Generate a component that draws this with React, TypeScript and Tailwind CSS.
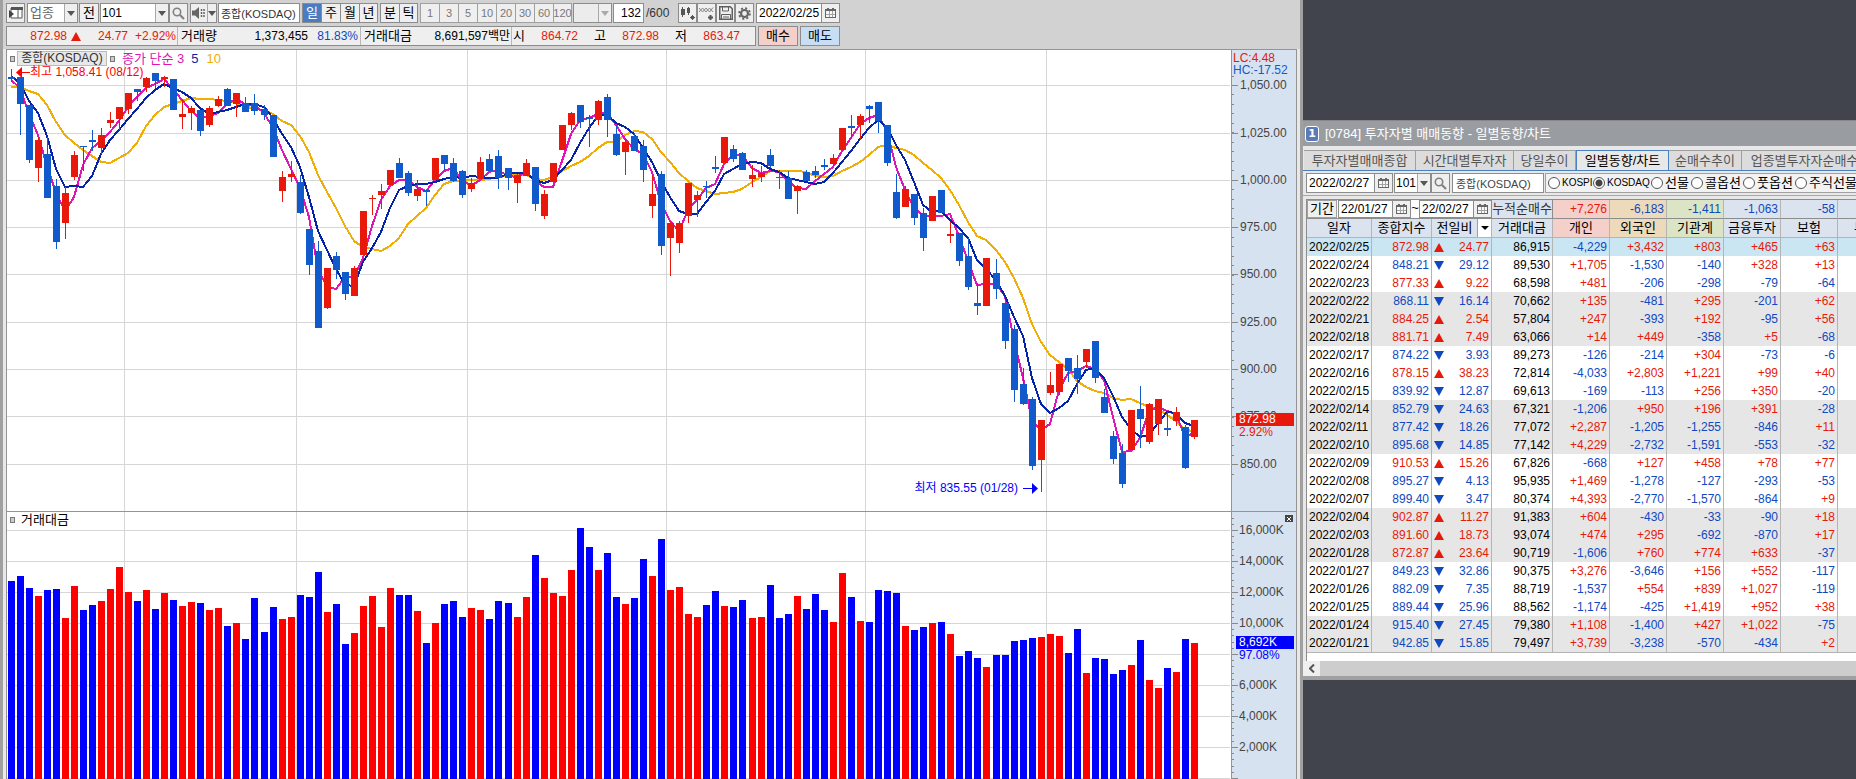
import React from "react";

type Candle = [color: "R" | "B", high: number, low: number, top: number, bottom: number, volume: number];

const CANDLES: Candle[] = [
  ["B", 69, 82, 77, 79, 581], ["B", 77, 135, 77, 104, 576], ["B", 105, 163, 105, 160, 588], ["R", 138, 182, 140, 168, 596],
  ["B", 137, 198, 154, 198, 590], ["B", 179, 249, 186, 242, 589], ["R", 187, 239, 193, 223, 618], ["R", 151, 180, 155, 177, 586],
  ["B", 146, 171, 146, 147, 610], ["B", 130, 151, 140, 142, 605], ["R", 128, 154, 135, 148, 601], ["R", 112, 128, 120, 123, 589],
  ["R", 107, 130, 107, 119, 567], ["R", 93, 114, 93, 109, 592], ["B", 89, 101, 89, 92, 601], ["R", 77, 92, 78, 87, 590],
  ["B", 73, 88, 73, 81, 609], ["R", 76, 87, 77, 79, 593], ["B", 79, 110, 79, 110, 600], ["R", 100, 129, 114, 117, 606],
  ["R", 106, 130, 108, 113, 602], ["B", 110, 136, 110, 131, 603], ["R", 106, 127, 108, 125, 610], ["R", 96, 107, 99, 106, 608],
  ["B", 88, 106, 89, 106, 626], ["R", 93, 117, 93, 104, 623], ["B", 97, 112, 103, 112, 639], ["B", 94, 115, 103, 111, 598],
  ["B", 105, 120, 109, 115, 632], ["B", 115, 157, 115, 157, 607], ["R", 171, 202, 177, 191, 619], ["R", 161, 182, 174, 177, 617],
  ["B", 175, 214, 182, 213, 595], ["B", 229, 275, 229, 265, 597], ["B", 241, 328, 251, 328, 572], ["R", 268, 309, 268, 308, 612],
  ["B", 252, 279, 256, 270, 604], ["B", 272, 300, 272, 294, 644], ["R", 266, 296, 268, 296, 633], ["R", 211, 255, 211, 255, 606],
  ["R", 195, 215, 198, 199, 596], ["R", 184, 209, 191, 195, 627], ["R", 170, 185, 170, 185, 588], ["B", 158, 178, 163, 178, 595],
  ["B", 171, 196, 173, 193, 595], ["R", 180, 201, 189, 196, 611], ["B", 190, 206, 190, 192, 643], ["R", 158, 180, 158, 180, 623],
  ["B", 155, 170, 155, 164, 604], ["B", 158, 182, 163, 181, 601], ["B", 170, 198, 171, 195, 617], ["R", 178, 192, 183, 189, 608],
  ["R", 157, 179, 162, 179, 610], ["B", 154, 171, 159, 171, 619], ["B", 150, 189, 156, 178, 601], ["B", 168, 190, 168, 178, 603],
  ["R", 174, 203, 175, 183, 617], ["R", 159, 176, 163, 176, 597], ["B", 167, 211, 167, 204, 555], ["R", 190, 219, 194, 216, 578],
  ["R", 163, 182, 163, 182, 593], ["R", 125, 150, 125, 150, 596], ["R", 112, 130, 113, 125, 570], ["B", 105, 128, 105, 122, 528],
  ["B", 115, 147, 117, 119, 547], ["R", 100, 125, 101, 120, 570], ["B", 94, 137, 97, 120, 553], ["B", 125, 156, 134, 155, 597],
  ["R", 139, 175, 142, 152, 604], ["B", 133, 151, 136, 151, 598], ["B", 140, 182, 146, 170, 559], ["R", 175, 218, 194, 206, 576],
  ["B", 171, 255, 174, 246, 539], ["R", 222, 276, 223, 238, 590], ["R", 221, 253, 223, 243, 587], ["R", 183, 223, 183, 216, 614],
  ["R", 191, 217, 195, 200, 617], ["B", 181, 198, 186, 187, 605], ["B", 156, 173, 167, 169, 591], ["R", 137, 163, 137, 163, 606],
  ["B", 145, 162, 149, 159, 607], ["B", 152, 170, 153, 170, 600], ["R", 165, 187, 175, 179, 618], ["R", 166, 182, 173, 177, 617],
  ["B", 149, 168, 155, 166, 585], ["B", 170, 189, 177, 178, 618], ["B", 171, 199, 178, 199, 614], ["R", 185, 214, 186, 191, 596],
  ["B", 170, 181, 172, 181, 609], ["B", 166, 178, 171, 175, 594], ["B", 159, 170, 165, 167, 610], ["R", 154, 166, 158, 164, 622],
  ["R", 128, 150, 128, 150, 573], ["B", 115, 138, 126, 128, 597], ["R", 114, 140, 116, 125, 621], ["B", 105, 123, 106, 109, 622],
  ["B", 102, 133, 102, 121, 590], ["B", 125, 166, 125, 163, 591], ["B", 174, 219, 192, 218, 593], ["R", 186, 207, 189, 207, 626],
  ["B", 194, 225, 194, 218, 630], ["B", 208, 251, 213, 238, 627], ["R", 196, 221, 196, 221, 623], ["B", 190, 213, 190, 213, 622],
  ["R", 222, 243, 234, 236, 634], ["B", 233, 266, 233, 261, 656], ["B", 238, 290, 256, 287, 651], ["B", 283, 315, 303, 306, 658],
  ["R", 258, 306, 258, 306, 667], ["B", 259, 299, 273, 289, 655], ["B", 303, 349, 303, 341, 655], ["B", 325, 402, 329, 390, 641],
  ["B", 368, 405, 384, 404, 640], ["B", 397, 470, 399, 466, 638], ["R", 420, 492, 420, 460, 637], ["R", 372, 395, 385, 393, 634],
  ["R", 364, 395, 364, 392, 636], ["B", 358, 382, 358, 371, 653], ["B", 355, 394, 368, 379, 629], ["R", 349, 368, 349, 362, 673],
  ["B", 341, 383, 341, 378, 658], ["B", 389, 413, 397, 413, 659], ["B", 431, 464, 436, 459, 674], ["B", 444, 488, 453, 484, 670],
  ["R", 410, 450, 410, 450, 665], ["B", 386, 448, 409, 419, 640], ["R", 403, 444, 404, 442, 680], ["R", 399, 435, 399, 424, 688],
  ["B", 412, 436, 428, 430, 668], ["R", 407, 426, 412, 421, 672], ["B", 425, 469, 427, 468, 639], ["R", 420, 439, 420, 437, 643],
];

// Closing levels of the nine sessions that precede the first visible candle.
const EARLIER = [100, 126, 108, 86, 70, 68, 72, 81, 80];
const CLOSES = EARLIER.concat(CANDLES.map((c) => (c[0] === "R" ? c[3] : c[4])));

const candleX = (i: number) => 11 + i * 9 + Math.trunc((i - 1) / 27);

function average(period: number) {
  return CANDLES.map((_, i) => {
    const end = i + EARLIER.length + 1;
    const sum = CLOSES.slice(end - period, end).reduce((a, b) => a + b, 0);
    return `${candleX(i)},${Math.round(sum / period)}`;
  }).join(" ");
}

const MONTHS = [124, 296, 467, 666, 865, 1046];
const PRICES: [string, number][] = [
  ["1,050.00", 85], ["1,025.00", 133], ["1,000.00", 180], ["975.00", 227], ["950.00", 274],
  ["925.00", 322], ["900.00", 369], ["875.00", 416], ["850.00", 464],
];
const VOLUMES: [string, number][] = [
  ["16,000K", 530], ["14,000K", 561], ["12,000K", 592], ["10,000K", 623], ["8,000K", 654],
  ["6,000K", 685], ["4,000K", 716], ["2,000K", 747], ["", 778],
];

const ROWS = `2022/02/25 872.98 + 24.77 86,915 -4,229 +3,432 +803 +465 +63
2022/02/24 848.21 - 29.12 89,530 +1,705 -1,530 -140 +328 +13
2022/02/23 877.33 + 9.22 68,598 +481 -206 -298 -79 -64
2022/02/22 868.11 - 16.14 70,662 +135 -481 +295 -201 +62
2022/02/21 884.25 + 2.54 57,804 +247 -393 +192 -95 +56
2022/02/18 881.71 + 7.49 63,066 +14 +449 -358 +5 -68
2022/02/17 874.22 - 3.93 89,273 -126 -214 +304 -73 -6
2022/02/16 878.15 + 38.23 72,814 -4,033 +2,803 +1,221 +99 +40
2022/02/15 839.92 - 12.87 69,613 -169 -113 +256 +350 -20
2022/02/14 852.79 - 24.63 67,321 -1,206 +950 +196 +391 -28
2022/02/11 877.42 - 18.26 77,072 +2,287 -1,205 -1,255 -846 +11
2022/02/10 895.68 - 14.85 77,142 +4,229 -2,732 -1,591 -553 -32
2022/02/09 910.53 + 15.26 67,826 -668 +127 +458 +78 +77
2022/02/08 895.27 - 4.13 95,935 +1,469 -1,278 -127 -293 -53
2022/02/07 899.40 - 3.47 80,374 +4,393 -2,770 -1,570 -864 +9
2022/02/04 902.87 + 11.27 91,383 +604 -430 -33 -90 +18
2022/02/03 891.60 + 18.73 93,074 +474 +295 -692 -870 +17
2022/01/28 872.87 + 23.64 90,719 -1,606 +760 +774 +633 -37
2022/01/27 849.23 - 32.86 90,375 +3,276 -3,646 +156 +552 -117
2022/01/26 882.09 - 7.35 88,719 -1,537 +554 +839 +1,027 -119
2022/01/25 889.44 - 25.96 88,562 -1,174 -425 +1,419 +952 +38
2022/01/24 915.40 - 27.45 79,380 +1,108 -1,400 +427 +1,022 -75
2022/01/21 942.85 - 15.85 79,497 +3,739 -3,238 -570 -434 +2`
  .split("\n")
  .map((line) => line.split(" "));

const UP = "text-[#e61a0a]";
const DOWN = "text-[#1048c0]";
const tone = (v: string) => (v.startsWith("-") ? DOWN : UP);

const Down = ({ light }: { light?: boolean }) => (
  <svg width="8" height="5" viewBox="0 0 8 5" className={light ? "text-[#aaaaaa]" : "text-[#555555]"} aria-hidden>
    <path d="M0 0h8L4 5z" fill="currentColor" />
  </svg>
);

const Calendar = () => (
  <svg width="11" height="10" viewBox="0 0 11 10" shapeRendering="crispEdges" aria-hidden>
    <path d="M0 1h11v9H0z" fill="#666" />
    <path d="M2 0h2v1H2zM7 0h2v1H7z" fill="#666" />
    <path d="M1 3h9v6H1z" fill="#f8f8f8" />
    <path d="M4 3h1v6H4zM7 3h1v6H7zM1 6h9v1H1z" fill="#a4a4a4" />
  </svg>
);

const Search = () => (
  <svg width="13" height="13" viewBox="0 0 13 13" fill="none" stroke="#808080" aria-hidden>
    <circle cx="5" cy="5" r="3.7" strokeWidth="1.6" />
    <path d="M8 8l4 4" strokeWidth="2.2" />
  </svg>
);

const ICON_BUTTON = "flex h-5 w-[19px] shrink-0 items-center justify-center border border-[#8c8c8c] bg-[#efefef]";

function Combo({ label, value, width, light, muted }: { label: string; value: string; width: string; light?: boolean; muted?: boolean }) {
  return (
    <div className={`flex h-5 shrink-0 border border-[#8c8c8c] ${light ? "bg-[#ececec]" : "bg-white"} ${width}`}>
      <select aria-label={label} className={`min-w-0 flex-1 appearance-none bg-transparent outline-none ${muted ? "pl-[2px] text-[#666666]" : "pl-px text-xs text-black"}`}>
        <option>{value}</option>
      </select>
      <span className="flex w-[13px] items-center justify-center border-l border-[#a8a8a8] bg-[#efefef]">
        <Down light={light} />
      </span>
    </div>
  );
}

function DateField({ label, value, width, height = "h-5" }: { label: string; value: string; width: string; height?: string }) {
  return (
    <div className={`flex shrink-0 border border-[#8c8c8c] bg-white text-xs ${height} ${width}`}>
      <input aria-label={label} defaultValue={value} className="min-w-0 flex-1 bg-transparent pl-[2px] outline-none" />
      <button aria-label={`${label} 달력`} className="flex w-[18px] items-center justify-center border-l border-[#8c8c8c] bg-[#efefef]">
        <Calendar />
      </button>
    </div>
  );
}

function Toolbar() {
  return (
    <div className="flex h-[23px] items-end">
      <button aria-label="메뉴" className={`${ICON_BUTTON} mr-[2px]`}>
        <svg width="14" height="12" viewBox="0 0 14 12" aria-hidden>
          <path d="M2 1h11v10H2zM9 1v10" fill="white" stroke="#555" />
          <path d="M2 0h12v3H2z" fill="#555" />
          <path d="M0 3l5 4-5 4z" fill="#444" />
        </svg>
      </button>
      <Combo label="시장 구분" value="업종" width="mr-px w-[51px]" muted />
      <button className="mr-px h-5 w-5 shrink-0 border border-[#8c8c8c] bg-[#efefef]">전</button>
      <Combo label="업종 코드" value="101" width="w-[69px]" />
      <button aria-label="검색" className={ICON_BUTTON}><Search /></button>
      <button aria-label="소리" className="ml-[2px] flex h-5 w-[27px] shrink-0 items-center border border-[#8c8c8c] bg-[#efefef]">
        <svg width="16" height="12" viewBox="0 0 16 12" aria-hidden>
          <path d="M1 3.5h3l4-3.5v12L4 8.5H1z" fill="#666" />
          <path d="M10.5 2v8M13 2v8" stroke="#666" strokeWidth="1.5" strokeDasharray="2 1" />
        </svg>
        <span className="flex h-full flex-1 items-center justify-center border-l border-[#a8a8a8]"><Down /></span>
      </button>
      <input aria-label="종목명" defaultValue="종합(KOSDAQ)" className="ml-px h-5 w-[82px] shrink-0 border border-[#8c8c8c] bg-white pl-[2px] text-[11px] text-[#333333] outline-none" />
      <div className="ml-[2px] flex shrink-0">
        {["일", "주", "월", "년"].map((t, i) => (
          <button key={t} className={`h-5 w-[19px] border border-r-0 border-[#8c8c8c] last:border-r ${i === 0 ? "bg-[#4a7cc4] text-white" : "bg-[#efefef]"}`}>{t}</button>
        ))}
      </div>
      <div className="ml-[2px] flex shrink-0">
        {["분", "틱"].map((t) => (
          <button key={t} className="h-5 w-[19px] border border-r-0 border-[#8c8c8c] bg-[#efefef] last:border-r">{t}</button>
        ))}
      </div>
      <div className="ml-[2px] flex shrink-0 text-[11px] text-[#777777]">
        {["1", "3", "5", "10", "20", "30", "60", "120"].map((t) => (
          <button key={t} className="h-5 w-[19px] border border-r-0 border-[#a0a0a0] bg-[#efefef] last:border-r">
            <span className="flex justify-center">{t}</span>
          </button>
        ))}
      </div>
      <Combo label="분 간격" value="" width="ml-px w-[39px]" light />
      <input aria-label="표시 개수" defaultValue="132" className="ml-px h-5 w-[31px] shrink-0 border border-[#8c8c8c] bg-white pr-[2px] text-right text-xs outline-none" />
      <span className="w-[34px] shrink-0 pl-[2px] text-xs leading-5 text-[#333333]">/600</span>
      <div className="flex shrink-0">
        <button aria-label="차트 추가" className={ICON_BUTTON}>
          <svg width="15" height="15" viewBox="0 0 15 15" shapeRendering="crispEdges" aria-hidden>
            <path d="M1 3h4v6H1zM2 1h1v10H2zM7 2h3v5H7zM8 1h1v8H8z" fill="#555" />
            <path d="M10 11h5v1h-5zM12 9h1v5h-1zM11 10h3v3h-3z" fill="#555" />
          </svg>
        </button>
        <button aria-label="지표 추가" className={ICON_BUTTON}>
          <svg width="15" height="15" viewBox="0 0 15 15" fill="none" stroke="#888" aria-hidden>
            <path d="M0 6l3.5-4L7 6l3.500-4L14 6M0 2l3.500 4L7 2l3.500 4L14 1.500" />
            <path d="M9 11.500h5M11.500 9v5" stroke="#555" strokeWidth="2" />
          </svg>
        </button>
        <button aria-label="저장" className={ICON_BUTTON}>
          <svg width="14" height="14" viewBox="0 0 14 14" fill="none" stroke="#606060" aria-hidden>
            <path d="M.75.75h10.500l2 2v10.500H.75z" strokeWidth="1.500" />
            <path d="M3.500 1v4h6V1M2.500 13V8.500h9V13M4 11h6" />
          </svg>
        </button>
        <button aria-label="설정" className={ICON_BUTTON}>
          <svg width="13" height="13" viewBox="0 0 13 13" fill="none" stroke="#666" aria-hidden>
            <circle cx="6.500" cy="6.500" r="3.500" strokeWidth="2.200" />
            <circle cx="6.500" cy="6.500" r="5.400" strokeWidth="1.800" strokeDasharray="2.100 2.140" />
          </svg>
        </button>
      </div>
      <DateField label="조회일" value="2022/02/25" width="ml-[2px] w-[84px]" />
    </div>
  );
}

function QuoteBar() {
  const num = "shrink-0 text-right text-xs leading-[18px]";
  return (
    <div className="mt-[3px] flex h-5 leading-[18px]">
      <div className="flex w-[750px] shrink-0 border border-[#8c8c8c] bg-[#efefef]">
        <span className={`${num} w-[60px] ${UP}`}>872.98</span>
        <span className="flex w-[18px] items-center justify-center">
          <svg width="10" height="9" viewBox="0 0 10 9" aria-hidden><path d="M5 0l5 9H0z" fill="#e61a0a" /></svg>
        </span>
        <span className={`${num} w-[43px] ${UP}`}>24.77</span>
        <span className={`${num} w-[50px] border-r border-[#b8b8b8] pr-px ${UP}`}>+2.92%</span>
        <span className="w-[41px] shrink-0 pl-[3px]">거래량</span>
        <span className={`${num} w-[89px]`}>1,373,455</span>
        <span className={`${num} w-[53px] border-r border-[#b8b8b8] pr-[2px] ${DOWN}`}>81.83%</span>
        <span className="w-[52px] shrink-0 pl-[3px]">거래대금</span>
        <span className={`${num} w-[99px] border-r border-[#b8b8b8] pr-px`}>8,691,597백만</span>
        <span className="w-[14px] shrink-0 pl-px">시</span>
        <span className={`${num} w-[52px] ${UP}`}>864.72</span>
        <span className="w-[28px] shrink-0 text-right">고</span>
        <span className={`${num} w-[53px] ${UP}`}>872.98</span>
        <span className="w-[28px] shrink-0 text-right">저</span>
        <span className={`${num} w-[53px] ${UP}`}>863.47</span>
      </div>
      <button className="ml-[2px] w-10 border border-[#8c8c8c] bg-[#f5cfca]">매수</button>
      <button className="ml-[2px] w-10 border border-[#8c8c8c] bg-[#c8def5]">매도</button>
    </div>
  );
}

const Marker = () => <span className="h-[6px] w-[5px] shrink-0 border border-[#777777] bg-[#cccccc]" />;

function PricePanel() {
  return (
    <div className="flex h-[462px] shrink-0 border-b border-[#949494]">
      <div className="relative min-w-0 flex-1">
        <svg className="block h-full w-full" viewBox="7 50 1224 461" preserveAspectRatio="none" shapeRendering="crispEdges" role="img" aria-label="종합(KOSDAQ) 일봉">
          {PRICES.map(([l, y]) => <rect key={l} x="7" y={y} width="1223" height="1" fill="#d6d6d6" />)}
          {MONTHS.map((x) => <rect key={x} x={x} y="50" width="1" height="461" fill="#d6d6d6" />)}
          <g fill="none" strokeWidth="2">
            <polyline points={average(10)} stroke="#f0ae05" />
            <polyline points={average(3)} stroke="#e014b4" />
            <polyline points={average(5)} stroke="#0522a8" />
          </g>
          {CANDLES.map(([c, high, low, top, bottom], i) => (
            <g key={i} fill={c === "R" ? "#e8190a" : "#105acb"}>
              <rect x={candleX(i)} y={high} width="1" height={low - high} />
              <rect x={candleX(i) - 3} y={top} width="7" height={bottom - top} />
            </g>
          ))}
        </svg>
        <div className="absolute left-[3px] top-[1px] flex h-[15px] items-center gap-[2px] leading-[15px]">
          <Marker />
          <button className="h-[15px] w-[90px] border border-[#bbbbbb] bg-[#e8e8e8] text-xs leading-[13px] text-[#333333]">종합(KOSDAQ)</button>
          <span className="ml-px flex"><Marker /></span>
          <span className="ml-[5px] text-[#e014b4]">종가 단순 3</span>
          <span className="ml-[5px] text-[#0522a8]">5</span>
          <span className="ml-[6px] text-[#f0ae05]">10</span>
        </div>
        <div className="absolute left-[9px] top-[14px] flex items-center text-xs leading-4 text-[#ff0000]">
          <svg width="14" height="11" viewBox="0 0 14 11" aria-hidden><path d="M0 5.500L6 0v5h8v1H6v5z" fill="currentColor" /></svg>
          최고 1,058.41 (08/12)
        </div>
        <div className="absolute right-[193px] top-[430px] flex items-center gap-[5px] text-xs leading-4 text-[#0000ff]">
          최저 835.55 (01/28)
          <svg width="15" height="11" viewBox="0 0 15 11" aria-hidden><path d="M15 5.500L9 0v5H0v1h9v5z" fill="currentColor" /></svg>
        </div>
      </div>
      <div className="relative w-[65px] shrink-0 border-l border-[#949494] bg-[#d7e2f0]">
        <svg className="block" width="64" height="461" viewBox="1232 50 64 461" aria-hidden>
          {Array.from({ length: 43 }, (_, i) => (
            <rect key={i} x="1232" y={Math.round(85 + (i - 1) * 9.48)} width="2" height="1" fill="#888" />
          ))}
          {PRICES.map(([l, y]) => (
            <g key={l}>
              <rect x="1232" y={y} width="6" height="1" fill="#888" />
              <text x="1240" y={y + 4} fill="#444" fontSize="12">{l}</text>
            </g>
          ))}
        </svg>
        <div className="absolute left-px top-[2px] text-xs leading-3">
          <div className="text-[#e61a0a]">LC:4.48</div>
          <div className="text-[#105acb]">HC:-17.52</div>
        </div>
        <div className="absolute left-[4px] top-[363px] w-[58px] text-xs leading-[13px]">
          <div className="bg-[#e8190a] pl-[3px] text-white">872.98</div>
          <div className="pl-[3px] text-[#e8190a]">2.92%</div>
        </div>
      </div>
    </div>
  );
}

function VolumePanel() {
  return (
    <div className="flex h-[267px] shrink-0">
      <div className="relative min-w-0 flex-1">
        <svg className="block h-full w-full" viewBox="7 512 1224 267" preserveAspectRatio="none" shapeRendering="crispEdges" role="img" aria-label="거래대금">
          {VOLUMES.map(([, y]) => <rect key={y} x="7" y={y} width="1223" height="1" fill="#d6d6d6" />)}
          {MONTHS.map((x) => <rect key={x} x={x} y="512" width="1" height="267" fill="#d6d6d6" />)}
          {CANDLES.map((c, i) => (
            <rect key={i} x={candleX(i) - 3} y={c[5]} width="7" height={779 - c[5]} fill={c[0] === "R" ? "#ff0000" : "#0000ff"} />
          ))}
        </svg>
        <div className="absolute left-[3px] top-0 flex items-center gap-[6px] leading-4">
          <Marker />거래대금
        </div>
      </div>
      <div className="relative w-[65px] shrink-0 border-l border-[#949494] bg-[#d7e2f0]">
        <svg className="block" width="64" height="267" viewBox="1232 512 64 267" aria-hidden>
          {Array.from({ length: 43 }, (_, i) => (
            <rect key={i} x="1232" y={Math.round(778 - i * 6.2)} width="2" height="1" fill="#888" />
          ))}
          {VOLUMES.map(([l, y]) => (
            <g key={y}>
              <rect x="1232" y={y} width="6" height="1" fill="#888" />
              {l !== "8,000K" && <text x="1239" y={y + 4} fill="#444" fontSize="12">{l}</text>}
            </g>
          ))}
        </svg>
        <button aria-label="닫기" className="absolute right-[3px] top-[3px] flex h-[7px] w-2 items-center justify-center bg-[#444444]">
          <svg width="4" height="4" viewBox="0 0 4 4" stroke="white" aria-hidden><path d="M0 0l4 4M4 0L0 4" /></svg>
        </button>
        <div className="absolute left-[4px] top-[124px] w-[58px] text-xs leading-[13px] text-[#0000ff]">
          <div className="bg-[#0000ff] pl-[3px] text-white">8,692K</div>
          <div className="pl-[3px]">97.08%</div>
        </div>
      </div>
    </div>
  );
}

function Flow() {
  const heads = ["개인", "외국인", "기관계", "금융투자", "보험", "투신"];
  const totals = ["+7,276", "-6,183", "-1,411", "-1,063", "-58", ""];
  const tints = ["bg-[#f5cfca]", "bg-[#ecdabb]", "bg-[#dbe4c4]", "bg-[#dbe3ee]", "bg-[#dbe3ee]", "bg-[#dbe3ee]"];
  const head = "h-[19px] border-b border-r border-[#b4b4b4] p-0 text-center font-normal";
  const num = "border-r border-[#b4b4b4] pr-[2px] text-right";
  return (
    <table className="w-[588px] table-fixed border-separate border-spacing-0 border-b border-[#b4b4b4] leading-[18px]">
      <colgroup>
        <col className="w-[65px]" /><col className="w-[60px]" /><col className="w-[60px]" /><col className="w-[61px]" />
        {heads.map((h) => <col key={h} className="w-[57px]" />)}
      </colgroup>
      <thead>
        <tr>
          <td colSpan={3} className="h-[19px] border-b border-[#8c8c8c] p-0">
            <div className="flex leading-4">
              <button className="mr-px h-[18px] w-[30px] shrink-0 border border-[#a0a0a0] bg-[#efefef]">기간</button>
              <DateField label="시작일" value="22/01/27" width="w-[73px]" height="h-[18px]" />
              <span className="w-2 text-center">~</span>
              <DateField label="종료일" value="22/02/27" width="w-[73px]" height="h-[18px]" />
            </div>
          </td>
          <th className="border-b border-r border-[#8c8c8c] bg-[#dbe3ee] p-0 text-center font-normal whitespace-nowrap text-[#333333]">누적순매수</th>
          {totals.map((v, i) => (
            <td key={i} className={`border-b border-r border-b-[#8c8c8c] border-r-[#b4b4b4] p-0 pr-[2px] text-right text-xs leading-[18px] ${tints[i]} ${tone(v)}`}>{v}</td>
          ))}
        </tr>
        <tr>
          <th className={`${head} bg-[#dbe3ee]`}>일자</th>
          <th className={`${head} bg-[#dbe3ee]`}>종합지수</th>
          <th className={`${head} bg-[#dbe3ee]`}>
            <div className="flex">
              <span className="flex-1">전일비</span>
              <button aria-label="전일비 선택" className="flex w-[14px] items-center justify-center border-l border-[#a0a0a0] bg-white">
                <svg width="8" height="4" viewBox="0 0 8 4" aria-hidden><path d="M0 0h8L4 4z" /></svg>
              </button>
            </div>
          </th>
          <th className={`${head} bg-[#dbe3ee]`}>거래대금</th>
          {heads.map((h, i) => <th key={h} className={`${head} ${tints[i]}`}>{h}</th>)}
        </tr>
      </thead>
      <tbody className="text-xs leading-[18px]">
        {ROWS.map((r, i) => {
          const up = r[2] === "+";
          const bg = i === 0 ? "bg-[#c9e6f2]" : Math.floor(i / 3) % 2 ? "bg-[#e6e6e6]" : "bg-white";
          return (
            <tr key={r[0]} className={`h-[18px] ${bg}`}>
              <td className="border-r border-[#b4b4b4] p-0 pl-[2px]">{r[0]}</td>
              <td className={`p-0 ${num} ${up ? UP : DOWN}`}>{r[1]}</td>
              <td className={`p-0 ${num} ${up ? UP : DOWN}`}>
                <div className="flex items-center justify-between pl-[2px]">
                  <svg width="10" height="9" viewBox="0 0 10 9" aria-hidden>
                    <path d={up ? "M5 0l5 9H0z" : "M0 0h10L5 9z"} fill="currentColor" />
                  </svg>
                  {r[3]}
                </div>
              </td>
              <td className={`p-0 ${num}`}>{r[4]}</td>
              {r.slice(5).map((v, j) => <td key={j} className={`p-0 ${num} ${tone(v)}`}>{v}</td>)}
              <td className="p-0" />
            </tr>
          );
        })}
      </tbody>
    </table>
  );
}

function InvestorWindow() {
  const tabs: [string, string][] = [
    ["투자자별매매종합", "w-[112px]"], ["시간대별투자자", "w-[98px]"], ["당일추이", "w-[62px]"],
    ["일별동향/차트", "w-[93px]"], ["순매수추이", "w-[73px]"], ["업종별투자자순매수", "w-[126px]"],
  ];
  const radios: [string, string][] = [
    ["KOSPI", "w-[45px] text-[10px]"], ["KOSDAQ", "w-[58px] text-[10px]"], ["선물", "w-10"], ["콜옵션", "w-[52px]"], ["풋옵션", "w-[52px]"], ["주식선물", "w-[66px]"],
  ];
  return (
    <section className="mt-[120px] border-b-4 border-t border-b-[#a0a0a0] border-t-[#888888] bg-[#e8e8e8]">
      <header className="flex h-[25px] items-center gap-[6px] bg-[#999da2] pl-[2px] text-white">
        <span className="flex h-4 w-[14px] items-center justify-center rounded-[3px] border border-white bg-[#5b7ab8] font-['DejaVu_Sans'] text-[11px] font-bold">1</span>
        <h1>[0784] 투자자별 매매동향 - 일별동향/차트</h1>
      </header>
      <div role="tablist" className="mt-1 flex h-[21px] overflow-hidden border-b border-[#4a80c0] pl-px">
        {tabs.map(([t, w], i) => (
          <button key={t} role="tab" aria-selected={i === 3}
            className={`shrink-0 border-t whitespace-nowrap leading-[18px] ${w} ${i === 3 ? "border-x border-[#4a80c0] bg-[#e8e8e8] text-black" : "border-r border-[#a0a0a0] bg-[#dcdcdc] text-[#555555]"}`}>
            {t}
          </button>
        ))}
      </div>
      <div className="flex h-[25px] items-center overflow-hidden border-b border-[#a8a8a8] pl-[3px]">
        <DateField label="기준일" value="2022/02/27" width="w-[87px]" />
        <Combo label="코드" value="101" width="ml-px w-[37px]" />
        <button aria-label="검색" className={ICON_BUTTON}><Search /></button>
        <input aria-label="업종명" defaultValue="종합(KOSDAQ)" className="ml-[2px] h-5 w-[92px] shrink-0 border border-[#8c8c8c] bg-white pl-[3px] text-[11px] text-[#444444] outline-none" />
        <fieldset className="ml-px flex h-5 shrink-0 items-center border border-[#a0a0a0] bg-[#f2f2f2] pl-[2px]">
          {radios.map(([r, w]) => (
            <label key={r} className={`flex shrink-0 items-center gap-[2px] whitespace-nowrap ${w}`}>
              <input type="radio" name="market" defaultChecked={r === "KOSDAQ"}
                className="size-3 shrink-0 appearance-none rounded-full border border-[#555555] bg-white checked:bg-[radial-gradient(circle,#444444_3px,#ffffff_4px)]" />
              {r}
            </label>
          ))}
        </fieldset>
      </div>
      <div className="ml-[3px] mt-[3px] overflow-hidden border-l border-t border-[#8c8c8c] bg-white pb-2">
        <Flow />
      </div>
      <div className="flex h-[15px] bg-[#cdcdcd]">
        <button aria-label="왼쪽으로" className="flex w-[17px] items-center justify-center bg-[#efefef]">
          <svg width="6" height="9" viewBox="0 0 6 9" fill="none" stroke="#555" strokeWidth="2" aria-hidden><path d="M5 .5l-4 4 4 4" /></svg>
        </button>
      </div>
    </section>
  );
}

export default function App() {
  return (
    <div className="flex h-screen overflow-hidden bg-[#41444d] font-['Liberation_Sans','Noto_Sans_CJK_KR',sans-serif] text-[13px] leading-[18px] text-black">
      <main className="flex min-w-0 flex-1 border-l-3 border-r-3 border-[#a0a0a0]">
        <div className="flex min-w-0 flex-1 flex-col overflow-hidden bg-[#d2d2d2]">
          <div className="shrink-0 pl-[3px]">
            <Toolbar />
            <QuoteBar />
          </div>
          <div className="mt-[3px] flex flex-1 flex-col border-l-3 border-r-3 border-[#e8e8e8]">
            <div className="border-l border-t border-r border-[#949494] bg-white">
              <PricePanel />
              <VolumePanel />
            </div>
          </div>
        </div>
      </main>
      <aside className="w-[553px] shrink-0 overflow-hidden">
        <InvestorWindow />
      </aside>
    </div>
  );
}
